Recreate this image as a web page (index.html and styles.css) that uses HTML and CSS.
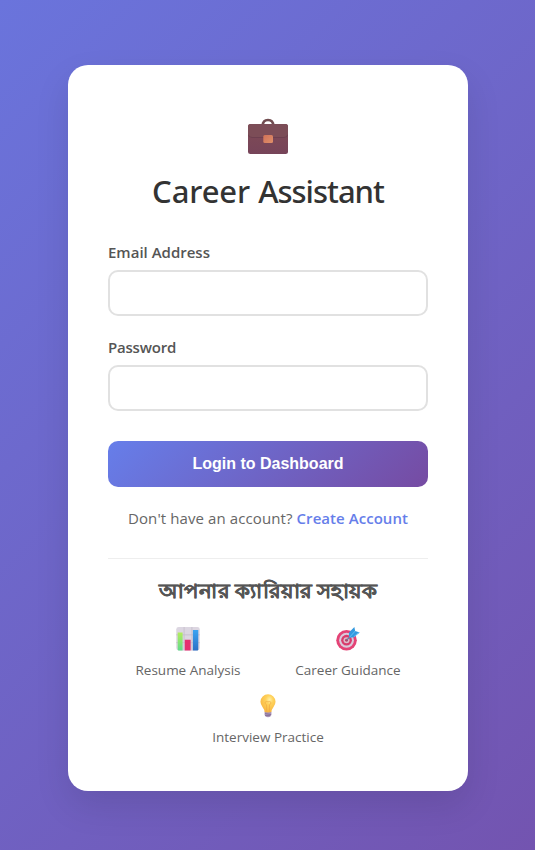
FILE: index.html
```html
<!DOCTYPE html>
<html lang="en">
<head>
<meta charset="utf-8">
<title>Career Assistant</title>
<link rel="stylesheet" href="styles.css">
</head>
<body>
<main class="card">
  <header class="brand">
    <svg class="briefcase" viewBox="0 0 40 36" aria-hidden="true">
      <defs><linearGradient id="case" x2="0" y2="1"><stop stop-color="#804b55"/><stop offset="1" stop-color="#764459"/></linearGradient>
      <linearGradient id="clasp" x2="1" y2="1"><stop stop-color="#cf7158"/><stop offset="1" stop-color="#e0906a"/></linearGradient></defs>
      <path d="M14.800 7.500C14.800 3.500 17 2 20 2s5.200 1.500 5.200 5.500" fill="none" stroke="#714c50" stroke-width="2.500"/>
      <rect y="6" width="40" height="30" rx="2.500" fill="url(#case)"/>
      <path d="M0 8.500Q0 6 2.500 6h35Q40 6 40 8.500V17q-1 3-4 3H4q-3 0-4-3z" fill="#7c4d57"/>
      <path d="M0 16.500q1 3 4 3h32q3 0 4-3" fill="none" stroke="#693c4c" stroke-width=".8"/>
      <rect x="15.300" y="17" width="9.700" height="8" rx="1.500" fill="url(#clasp)"/>
    </svg>
    <h1><span class="career">Career</span> <span class="assistant">Assistant</span></h1>
  </header>
  <form class="form">
    <label class="email-label" for="email">Email Address</label>
    <input id="email" type="email">
    <label for="password">Password</label>
    <input id="password" type="password">
    <button type="button">Login to Dashboard</button>
  </form>
  <p class="signup"><span class="ask">Don't have an account?</span> <a>Create Account</a></p>
  <section class="features">
    <h2 lang="bn">আপনার ক্যারিয়ার সহায়ক</h2>
    <div class="grid">
      <div class="feature">
        <svg viewBox="0 0 24 24" aria-hidden="true">
          <defs><linearGradient id="green" x2="0" y2="1"><stop stop-color="#b4ed5c"/><stop offset="1" stop-color="#61dc8c"/></linearGradient><linearGradient id="blue" x2="0" y2="1"><stop stop-color="#3ba4f2"/><stop offset="1" stop-color="#2b70c6"/></linearGradient></defs>
          <rect width="24" height="24" rx="2.500" fill="#dcd6e1"/>
          <path d="M0 8h24M0 16h24M8 0v24M16 0v24" stroke="#c3bcca" stroke-width=".8"/>
          <path d="M1.500 5.500H6.500V24H2.500q-1 0-1-1z" fill="url(#green)"/><path d="M8.700 13h6v11h-6z" fill="#e5306f"/><path d="M17 3h5.500V23q0 1-1 1H17z" fill="url(#blue)"/>
        </svg>
        <span>Resume Analysis</span>
      </div>
      <div class="feature">
        <svg viewBox="0 0 24 24" aria-hidden="true">
          <circle cx="10.500" cy="13.500" r="10.500" fill="#e44376"/><circle cx="10.500" cy="13.500" r="7.600" fill="#d9cbdc"/><circle cx="10.500" cy="13.500" r="5.500" fill="#d93c6c"/><circle cx="10.500" cy="13.500" r="3.100" fill="#dcbccb"/><circle cx="10.500" cy="13.500" r="1.500" fill="#bf3b63"/>
          <path d="M10.500 13.500L16 8" stroke="#66819f" stroke-width="1.300"/>
          <path d="M13 9.500l0-4L18.500 0l.8 4L24 5.500l-6 5-4 .5z" fill="#3499df"/><path d="M13.500 10.500l6-6.500M18 10l5-4.500" fill="none" stroke="#68c3f7" stroke-width=".9"/>
        </svg>
        <span>Career Guidance</span>
      </div>
      <div class="feature wide">
        <svg viewBox="0 0 24 24" aria-hidden="true">
          <defs><radialGradient id="bulb" cx=".6" cy=".3" r=".7"><stop stop-color="#fff0a5"/><stop offset=".35" stop-color="#ffd25b"/><stop offset="1" stop-color="#f8b43f"/></radialGradient></defs>
          <path d="M8.500 18h7v3q-.5 2.800-3.500 2.800T8.500 21z" fill="#a994b8"/><path d="M9 20l6 1M9 22h5" stroke="#80698f" stroke-width=".8"/>
          <path d="M8.500 18.500q0-2.500-2-5Q4.300 10.500 4.300 8a7.700 7.700 0 0 1 15.400 0q0 2.500-2.200 5.500-2 2.500-2 5-3.500 1-7 0z" fill="url(#bulb)"/>
          <path d="M10.500 18V11q-2-1-1.500-2.500Q10 7 12 8q2-1 3 .5.5 1.500-1.500 2.500v7" fill="none" stroke="#f0aa45" stroke-width=".7"/>
        </svg>
        <span>Interview Practice</span>
      </div>
    </div>
  </section>
</main>
</body>
</html>
```
FILE: styles.css
```css
* { box-sizing: border-box; margin: 0; padding: 0; }
body {
  height: 850px;
  padding-top: 65px;
  overflow: hidden;
  background: linear-gradient(135deg, #6a74dc 0%, #7354b0 100%);
  font-family: "Open Sans", "Noto Sans", sans-serif;
}
.card {
  width: 400px;
  height: 726px;
  margin: 0 auto;
  padding: 53px 40px 40px;
  border-radius: 20px;
  background: #fff;
  box-shadow: 0 15px 35px rgba(0, 0, 0, .1);
  position: relative;
  left: .5px;
}
.brand { height: 116.5px; text-align: center; }
.briefcase { display: block; width: 40px; height: 36px; margin: 0 auto; }
h1 { margin-top: 16px; font-family: "Noto Sans", sans-serif; font-size: 31px; line-height: 43px; font-weight: 500; color: #333; white-space: nowrap; }
.career { letter-spacing: -.1px; }
.assistant { letter-spacing: -1px; }
label { display: block; height: 35.5px; padding-top: 6px; font-size: 15px; line-height: 22px; font-weight: 600; color: #555; letter-spacing: -.2px; }
.email-label { letter-spacing: 0; }
input { display: block; width: 320px; height: 46px; margin-bottom: 13.5px; padding: 12px; border: 2px solid #e1e1e1; border-radius: 10px; background: #fff; }
#password { margin-bottom: 30px; }
button { display: block; width: 320px; height: 46px; border: 0; border-radius: 10px; background: linear-gradient(135deg, #667eea 0%, #764ba2 100%); color: #fff; font: 600 16px "Liberation Sans", sans-serif; }
.signup { height: 71px; padding-top: 20px; text-align: center; font-size: 15px; line-height: 23px; color: #666; letter-spacing: .1px; white-space: nowrap; }
.signup a { color: #667eea; font-weight: 600; letter-spacing: .05px; }
.features { border-top: 1px solid #eee; padding-top: 17px; text-align: center; }
h2 { height: 51px; font-size: 20px; line-height: 30px; font-weight: 600; color: #555; white-space: nowrap; -webkit-text-stroke: .3px #555; transform: scaleX(1.065); }
.grid { display: grid; grid-template-columns: 160px 160px; row-gap: 14px; }
.feature { height: 53px; display: flex; flex-direction: column; align-items: center; font-size: 13.5px; line-height: 20px; color: #666; white-space: nowrap; }
.feature svg { width: 24px; height: 24px; margin-bottom: 9.5px; }
.wide { grid-column: 1 / 3; }
```
